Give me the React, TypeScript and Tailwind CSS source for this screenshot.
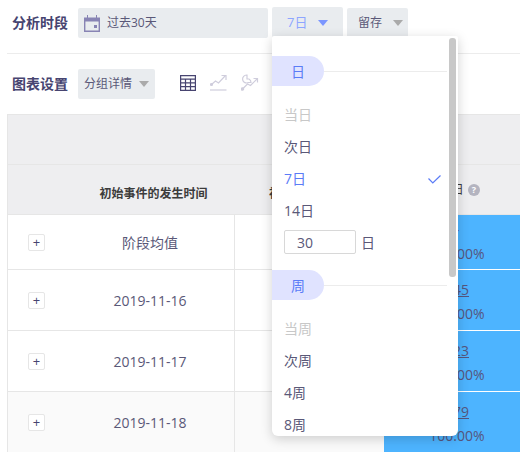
import React from "react";

const font = "font-['Open_Sans','Noto_Sans_CJK_SC',sans-serif]";

function Caret({ color, gap }: { color: string; gap: string }) {
  return (
    <svg width="10" height="6" viewBox="0 0 10 6" className={`${gap} shrink-0`}>
      <path d="M0 0h10L5 6z" fill={color} />
    </svg>
  );
}

function Calendar() {
  return (
    <svg width="16" height="17" viewBox="0 0 16 17" className="shrink-0">
      <path d="M0 2.5h3V0h1v2.5h8V0h1v2.5h3V17H0z M1.4 6.5V15.6H14.6V6.5z" fill="#8884b4" fillRule="evenodd" />
      <rect x="10" y="10" width="3" height="3" fill="#8884b4" />
    </svg>
  );
}

function TableIcon() {
  return (
    <svg width="16" height="16" viewBox="0 0 16 16" fill="none" stroke="#474470" strokeWidth="1.200">
      <path d="M.6.6h14.800v14.800H.6z M.6 4.200h14.800 M.6 7.900h14.800 M.6 11.700h14.800 M5.500 4.200v11.200 M10.500 4.200v11.200" />
    </svg>
  );
}

function LineIcon() {
  return (
    <svg width="17" height="17" viewBox="0 0 17 17" fill="none" stroke="#cfcddc" strokeWidth="1.200">
      <path d="M0 16h16.500" />
      <path d="M1.500 10.500l4-3.500 3 2L15.500 1.500" />
      <path d="M11.500 1.500h4.500v4.500" />
      <circle cx="1.500" cy="10.500" r="1" fill="#cfcddc" />
    </svg>
  );
}

function MixIcon() {
  return (
    <svg width="18" height="17" viewBox="0 0 18 17" fill="none" stroke="#cfcddc" strokeWidth="1.200">
      <path d="M1.500 15l5-5 3 1.500L16 5" />
      <path d="M12.500 4.500h4v4" />
      <circle cx="1.500" cy="15" r="1.200" fill="#cfcddc" />
      <path d="M6 1a4 4 0 1 0 1.500 7.500H10a4 4 0 0 0-2-3.500H6V1z" />
    </svg>
  );
}

function Check() {
  return (
    <svg width="13" height="9" viewBox="0 0 13 9" fill="none" stroke="#5b7cf7" strokeWidth="1.200">
      <path d="M.5 3.500L4.800 8 12.500.5" />
    </svg>
  );
}

function Row({
  height,
  label,
  value,
  percent,
  shaded,
  link = true,
  pad = "pt-[4px]",
}: {
  height: string;
  label: string;
  value: string;
  percent: string;
  shaded?: boolean;
  link?: boolean;
  pad?: string;
}) {
  return (
    <div className={`flex ${height} ${shaded ? "bg-[#fafafa]" : "bg-white"}`}>
      <div className="relative flex w-[227px] shrink-0 items-center justify-center border-b border-r border-[#e6e6e6] pl-[58px] text-[14px] text-[#5a5878]">
        <span className="absolute left-[20px] flex h-[17px] w-[17px] items-center justify-center rounded-[2px] border border-[#e6e6e6] bg-white text-[13px] leading-none text-[#474470]">
          +
        </span>
        <span>{label}</span>
      </div>
      <div className="w-[149px] shrink-0 border-b border-[#e6e6e6]" />
      <div className={`flex w-[146px] shrink-0 flex-col items-center justify-center border-b border-white bg-[#4db4ff] ${pad} text-[14px] leading-[24px] text-[#56567e]`}>
        <span className={link ? "underline" : ""}>{value}</span>
        <span>{percent}</span>
      </div>
    </div>
  );
}

export default function App() {
  return (
    <div className={`relative h-[452px] w-[520px] overflow-hidden bg-white ${font}`}>
      <div className="flex h-[53px] items-start pl-[12px] pt-[8px]">
        <span className="w-[66px] text-[14px] font-bold leading-[30px] text-[#474470]">分析时段</span>
        <div className="flex h-[30px] w-[190px] items-center rounded-[2px] bg-[#e9ecef] pl-[6px] text-[12px] text-[#5a5878]">
          <Calendar />
          <span className="ml-[7px]">过去30天</span>
        </div>
        <div className="ml-[4px] mt-[-1px] flex h-[31px] w-[71px] items-center rounded-[2px] bg-[#e9ecef] pl-[15px] text-[13px] text-[#8ea6ff]">
          7日
          <Caret color="#7b96ff" gap="ml-[11px]" />
        </div>
        <div className="ml-[4px] flex h-[30px] w-[61px] items-center rounded-[2px] bg-[#e9ecef] pl-[11px] text-[12px] text-[#5a5878]">
          留存
          <Caret color="#aaaaaa" gap="ml-[11px]" />
        </div>
      </div>
      <div className="ml-[7px] h-px bg-[#ececec]" />
      <div className="flex h-[60px] items-start pl-[12px] pt-[15px]">
        <span className="w-[66px] text-[14px] font-bold leading-[30px] text-[#474470]">图表设置</span>
        <div className="flex h-[30px] w-[77px] items-center rounded-[2px] bg-[#e9ecef] pl-[6px] text-[12px] text-[#5a5878]">
          分组详情
          <Caret color="#aaaaaa" gap="ml-[7px]" />
        </div>
        <div className="ml-[25px] flex items-center gap-[14px] pt-[5px]">
          <TableIcon />
          <LineIcon />
          <MixIcon />
        </div>
      </div>
      <div className="ml-[7px] border-l border-t border-[#e6e6e6]">
        <div className="h-[50px] border-b border-[#e6e6e6] bg-[#eeeef0]" />
        <div className="flex h-[50px] items-center border-b border-[#e6e6e6] bg-[#eeeef0] text-[12px] text-[#3c3c3c]">
          <div className="w-[227px] shrink-0 pl-[64px] pt-[9px] text-center font-bold">初始事件的发生时间</div>
          <div className="w-[149px] shrink-0 pl-[34px] pt-[9px] font-bold">初</div>
          <div className="flex w-[146px] shrink-0 items-center pl-[61px]">
            7日
            <span className="ml-[4px] flex h-[12px] w-[12px] items-center justify-center rounded-full bg-[#b4b4c0] text-[9px] font-bold leading-none text-white">
              ?
            </span>
          </div>
        </div>
        <Row height="h-[55px]" label="阶段均值" value="-" percent="100.00%" link={false} pad="pt-0" />
        <Row height="h-[61px]" label="2019-11-16" value="145" percent="100.00%" />
        <Row height="h-[61px]" label="2019-11-17" value="123" percent="100.00%" />
        <Row height="h-[61px]" label="2019-11-18" value="179" percent="100.00%" shaded />
      </div>

      <div className="absolute left-[272px] top-[36px] h-[400px] w-[186px] overflow-hidden rounded-b-[6px] rounded-t-[2px] bg-white text-[14px] text-[#5a5878] shadow-[0_3px_12px_rgba(0,0,0,0.18)]">
        <div className="absolute right-[2px] top-[2px] h-[239px] w-[7px] rounded-[3px] bg-[#c8c8c8]" />
        <div className="pt-[20px]">
          <div className="flex items-center">
            <div className="flex h-[30px] w-[52px] items-center justify-center rounded-r-[15px] bg-[#e0e3ff] text-[#5b7cf7]">
              日
            </div>
            <div className="h-px w-[123px] bg-[#ececec]" />
          </div>
          <div className="mt-[13px] pl-[12px] leading-[32px]">
            <div className="text-[#c8c8c8]">当日</div>
            <div>次日</div>
            <div className="flex items-center justify-between pr-[17px] text-[#5b7cf7]">
              7日
              <Check />
            </div>
            <div>14日</div>
          </div>
          <div className="flex items-center pl-[12px] pt-[3px]">
            <div className="flex h-[24px] w-[72px] items-center rounded-[2px] border border-[#d8d8d8] pl-[12px]">30</div>
            <span className="ml-[5px]">日</span>
          </div>
        </div>
        <div className="pt-[16px]">
          <div className="flex items-center">
            <div className="flex h-[30px] w-[52px] items-center justify-center rounded-r-[15px] bg-[#e0e3ff] text-[#5b7cf7]">
              周
            </div>
            <div className="h-px w-[123px] bg-[#ececec]" />
          </div>
          <div className="mt-[13px] pl-[12px] leading-[32px]">
            <div className="text-[#c8c8c8]">当周</div>
            <div>次周</div>
            <div>4周</div>
            <div>8周</div>
          </div>
        </div>
      </div>
    </div>
  );
}
